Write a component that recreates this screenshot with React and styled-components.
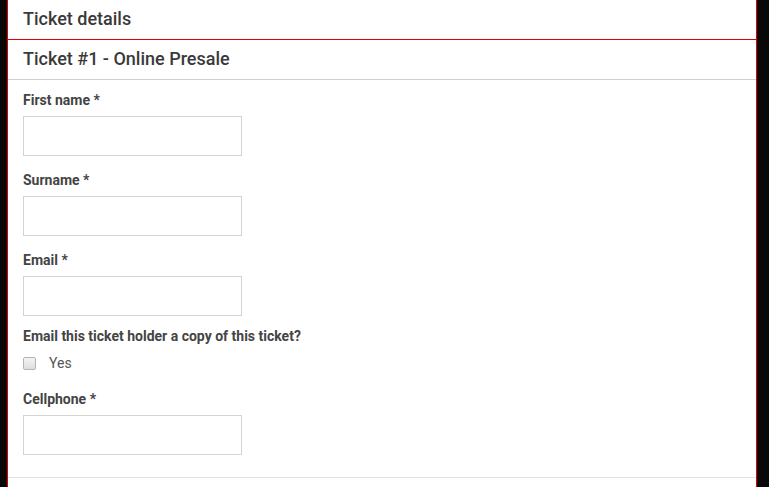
import React from "react"
import styled, { createGlobalStyle } from "styled-components"

const GlobalStyle = createGlobalStyle`
  html, body {
    margin: 0;
    padding: 0;
    background-color: #080808;
  }
  body {
    font-family: Roboto, "Liberation Sans", sans-serif;
  }
`

const Page = styled.div`
  display: flex;
  min-height: 487px;
  padding: 0 12px 0 7px;
  background-color: #080808;
`
const Panel = styled.div`
  flex: 1;
  background-color: #fff;
  border-left: 1px solid #e00000;
  border-right: 1px solid #e00000;
`
const Heading = styled.div`
  box-sizing: border-box;
  height: 40px;
  display: flex;
  align-items: center;
  padding: 0 15px 2px;
  font-size: 18px;
  font-weight: 500;
  color: #3a3a3a;
  border-bottom: 1px solid ${(p) => p.$line};
`
const Form = styled.div`
  padding: 10px 15px 22px;
  border-bottom: 1px solid #e2e2e2;
`
const Field = styled.div`
  margin-bottom: ${(p) => p.$gap ?? 14}px;
`
const Label = styled.div`
  font-size: 14px;
  font-weight: 700;
  line-height: 20px;
  color: #444;
  margin-bottom: 6px;
`
const Input = styled.input`
  display: block;
  box-sizing: border-box;
  width: 219px;
  height: 40px;
  margin: 0;
  border: 1px solid #d4d4d4;
  background: #fff;
  outline: none;
`
const CheckRow = styled.label`
  display: flex;
  align-items: center;
  height: 20px;
  margin-top: 7px;
  font-size: 14px;
  color: #555;
`
const Box = styled.span`
  box-sizing: border-box;
  width: 13px;
  height: 13px;
  margin-right: 13px;
  border: 1px solid #b4b4b4;
  border-radius: 2px;
  background: linear-gradient(#f4f4f4, #dedede);
`

const App = () => {
  return (
    <>
      <GlobalStyle />
      <Page>
        <Panel>
          <Heading $line="#e00000">Ticket details</Heading>
          <Heading $line="#d0d0d0">Ticket #1 - Online Presale</Heading>
          <Form>
            <Field>
              <Label>First name *</Label>
              <Input type="text" />
            </Field>
            <Field>
              <Label>Surname *</Label>
              <Input type="text" />
            </Field>
            <Field $gap={10}>
              <Label>Email *</Label>
              <Input type="text" />
            </Field>
            <Field $gap={16}>
              <Label>Email this ticket holder a copy of this ticket?</Label>
              <CheckRow>
                <Box />
                Yes
              </CheckRow>
            </Field>
            <Field $gap={0}>
              <Label>Cellphone *</Label>
              <Input type="text" />
            </Field>
          </Form>
        </Panel>
      </Page>
    </>
  )
}

export default App
